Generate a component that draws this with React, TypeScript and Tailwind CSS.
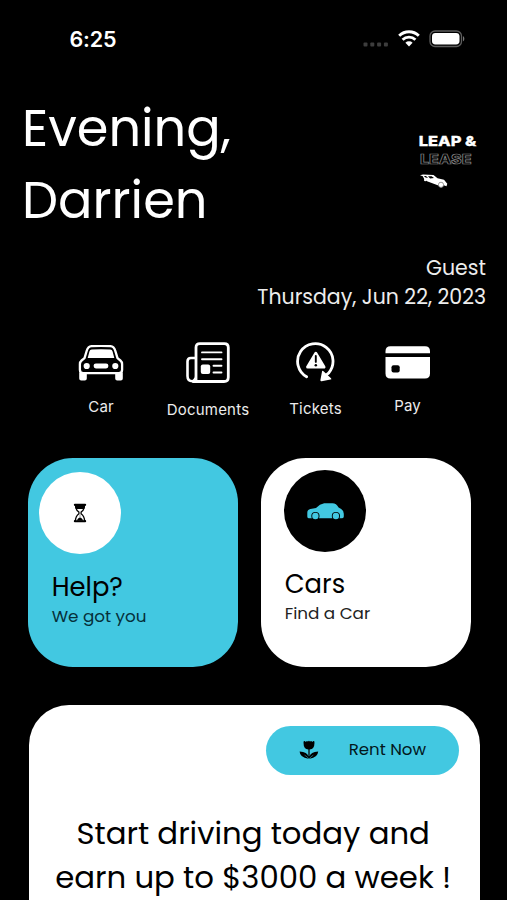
import React from "react";

const poppins = "font-['Poppins',Inter,sans-serif] whitespace-nowrap";

function StatusBar() {
  return (
    <div className="flex h-[91.5px] items-start pl-[69.5px] pr-[41px] pt-[27px]">
      <span className="text-[21.5px] leading-6 font-semibold tracking-[-0.15px]">6:25</span>
      <div className="ml-auto flex items-start">
        <svg className="mt-[14.5px]" width="26" height="5" viewBox="0 0 26 5" fill="#3d3d3d">
          <rect x="0.5" y="0.5" width="4" height="4" rx="1" />
          <rect x="7.3" y="0.5" width="4" height="4" rx="1" />
          <rect x="14.1" y="0.5" width="4" height="4" rx="1" />
          <rect x="20.9" y="0.5" width="4" height="4" rx="1" />
        </svg>
        <svg className="ml-[9px] mt-[3px]" width="22" height="17" viewBox="0 0 22 17" fill="none" stroke="white" strokeWidth="2.9">
          <path d="M1.2 5.7a14 14 0 0 1 19.6 0" />
          <path d="M4.6 9.7a9.2 9.2 0 0 1 12.8 0" />
          <path d="M7.4 12.7a5.2 5.2 0 0 1 7.2 0L11 16.4z" fill="white" stroke="none" />
        </svg>
        <svg className="ml-[9px] mt-[2.5px]" width="37" height="18" viewBox="0 0 37 18">
          <rect x="1" y="1" width="31.5" height="15.5" rx="5" fill="none" stroke="#5c5c5c" strokeWidth="1.3" />
          <rect x="3" y="3" width="27.5" height="11.5" rx="3.4" fill="white" />
          <path d="M34 6.2c1.8.6 1.8 4.4 0 5z" fill="#777" />
        </svg>
      </div>
    </div>
  );
}

function Logo() {
  return (
    <svg width="62" height="58" viewBox="0 0 62 58" fontFamily="Inter, sans-serif" fontWeight="800">
      <text x="2.8" y="14.4" fontSize="13.8" fill="white" stroke="white" strokeWidth="0.3" textLength="57.5" lengthAdjust="spacingAndGlyphs">LEAP &amp;</text>
      <text x="4" y="31.6" fontSize="13.8" fill="black" stroke="#858585" strokeWidth="0.7" textLength="51.5" lengthAdjust="spacingAndGlyphs">LEASE</text>
      <path d="M4 43.3L7 42.6 17.5 43 21.5 46.2 28 47.8 31.3 51.8 30.5 54.3 27.7 53.2A2.7 2.7 0 0 1 22.4 53.5L11 49.2 8.3 47.3 6.8 44.3z" fill="white" />
      <path d="M12 44.2l3.6.1 2.4 1.8-3.9.4zM7.8 44l2.2.1 2 2-2.4-.5z" fill="black" />
      <circle cx="25" cy="52.8" r="2.6" fill="white" stroke="black" strokeWidth="0.4" />
      <circle cx="9.2" cy="48" r="1.2" fill="white" />
    </svg>
  );
}

function CarFrontIcon() {
  return (
    <svg width="46" height="36" viewBox="0 0 46 36">
      <path d="M1.2 27.5h7.6v6a2 2 0 0 1-2 2H3.2a2 2 0 0 1-2-2zM37.2 27.5h7.6v6a2 2 0 0 1-2 2h-3.6a2 2 0 0 1-2-2z" fill="white" />
      <path d="M6.5 13.2L8.7 5.8Q10 1.5 13.5 1.2Q23 .4 32.5 1.2Q36 1.5 37.3 5.8l2.2 7.4 2.9 2.3q1.7 1.4 1.7 3.8v5.5q0 3.4-3.4 3.4H5.3q-3.4 0-3.4-3.4v-5.5q0-2.4 1.7-3.8z" fill="black" stroke="white" strokeWidth="2.3" strokeLinejoin="round" />
      <path d="M11.4 6.6q.5-1.9 2.4-2 9.2-.5 18.4 0 1.9.1 2.4 2l1.7 6.4H9.7z" fill="white" />
      <circle cx="8.7" cy="21" r="3.1" fill="white" />
      <circle cx="37.3" cy="21" r="3.1" fill="white" />
      <rect x="15.6" y="18.5" width="14.8" height="4.9" rx="2.3" fill="white" />
    </svg>
  );
}

function NewspaperIcon() {
  return (
    <svg width="44" height="42" viewBox="0 0 44 42" fill="none" stroke="white">
      <path d="M10 16H4.8Q1.5 16 1.5 19.5V34q0 5.2 5 5.2" strokeWidth="2.6" />
      <path d="M10 38.5V5.6Q10 1.6 14 1.6H38.3Q42.3 1.6 42.3 5.6V35.2Q42.3 39.5 38 39.5H6.3Q10 38 10 34" strokeWidth="2.8" />
      <path d="M16 10.4H35.5M16 17.2H35.5M27.5 23.7H35.5M27.5 30.5H35.5" strokeWidth="1.9" strokeLinecap="round" />
      <rect x="14.8" y="22.6" width="9.4" height="9.3" rx="2" fill="white" stroke="none" />
    </svg>
  );
}

function TicketIcon() {
  return (
    <svg width="40" height="42" viewBox="0 0 40 42" fill="none">
      <path d="M10.6 34.8A17.7 17.7 0 1 1 32.5 31.2L29.5 33.5" stroke="white" strokeWidth="2.8" strokeLinecap="round" />
      <path d="M26 29.8q0-1.6 1.5-.6L35 36.2q1.1 1.3-.5 1.4L25.7 39.2q-1.4.2-1.3-1.2z" fill="white" />
      <path d="M19.8 11.2L28 25.1H11.6z" fill="white" stroke="white" strokeWidth="3" strokeLinejoin="round" />
      <path d="M19.8 13.9v6" stroke="black" strokeWidth="1.9" strokeLinecap="round" />
      <circle cx="19.8" cy="23.2" r="1.25" fill="black" />
    </svg>
  );
}

function CardIcon() {
  return (
    <svg width="46" height="34" viewBox="0 0 46 34" fill="white">
      <path d="M.5 7.3V5.3Q.5.2 5.5.2H40Q45 .2 45 5.3V7.3zM.5 11H45V27.5Q45 32.5 40 32.5H5.5Q.5 32.5 .5 27.5z" />
      <rect x="6.5" y="19.3" width="8.2" height="7.2" rx="2" fill="black" />
    </svg>
  );
}

function HourglassIcon() {
  return (
    <svg width="14" height="20" viewBox="0 0 14 20">
      <rect x="0.8" y="0.7" width="12.4" height="2.2" rx="1.1" />
      <rect x="0.8" y="17.1" width="12.4" height="2.2" rx="1.1" />
      <path d="M2.5 2q0 5 3.4 7v1.8Q2.5 13 2.5 18h9q0-5-3.4-7.2V9q3.4-2 3.4-7" fill="white" stroke="black" strokeWidth="1.3" />
      <path d="M1.9 2h10.2q-.2 2.5-1.1 4H3Q2.1 4.5 1.9 2z" />
      <path d="M7 11.5v3.2M4 17.5q1-2.5 3-2.8 2 .3 3 2.8z" stroke="black" strokeWidth="0.4" />
    </svg>
  );
}

function CarSideIcon() {
  return (
    <svg width="37" height="18" viewBox="0 0 37 18">
      <path d="M1.6 16.2Q.3 16.2.3 14.6V10.8Q.3 7.6 3.4 7L9 5.9Q12.8 2 17.2 1.2H25.4Q29.4 1.2 31.6 5.6L34.2 7.1Q36.8 8.6 36.8 11.8V14.6Q36.8 16.2 35.2 16.2z" fill="#42c8e1" />
      <circle cx="8.4" cy="14" r="4.1" fill="black" />
      <circle cx="28.9" cy="14" r="4.1" fill="black" />
      <circle cx="8.4" cy="14" r="3.2" fill="#42c8e1" />
      <circle cx="28.9" cy="14" r="3.2" fill="#42c8e1" />
    </svg>
  );
}

function FlowerIcon() {
  return (
    <svg width="20" height="20" viewBox="0 0 20 20">
      <path d="M4.6 1.5q.7-1.1 2.3.5Q8 .2 9 1.8q.9-2.2 2 0 1.1-1.6 2.2.2 1.5-1.6 2.2-.5Q16 9 10.6 9.6v7Q11.5 12 19.2 11.6 18.7 17.7 10.6 18.8H9.4Q1 17.7.6 11.6 8.4 12 9.4 16.6v-7Q4 9 4.6 1.5z" />
      <path d="M9.8 19Q9 17 5.6 15.2M10.3 19q.7-2 4-3.8" fill="none" stroke="#42c8e1" strokeWidth="0.5" />
    </svg>
  );
}

function Header() {
  return (
    <header className="flex h-[161px] justify-between pl-[22px] pr-[29px]">
      <h1 className={`${poppins} text-[51px] leading-[72px] font-normal`}>
        <span className="block">Evening,</span>
        <span className="block">Darrien</span>
      </h1>
      <div className="pt-[40.5px]"><Logo /></div>
    </header>
  );
}

function Shortcuts() {
  const label = "text-[15px] leading-5 text-[#ececec] whitespace-nowrap";
  return (
    <nav className="flex h-[116.5px] items-start pl-[78px]">
      <div className="flex w-[46px] flex-col items-center pt-[3.5px]">
        <CarFrontIcon />
        <span className={`${label} mt-[16px] tracking-[0.1px]`}>Car</span>
      </div>
      <div className="ml-[42px] flex w-[84px] flex-col items-center pt-[0.5px]">
        <NewspaperIcon />
        <span className={`${label} mt-[16px] tracking-[0.22px]`}>Documents</span>
      </div>
      <div className="ml-[38.5px] flex w-[54px] flex-col items-center pt-[0.5px]">
        <TicketIcon />
        <span className={`${label} mt-[15px] tracking-[0.2px]`}>Tickets</span>
      </div>
      <div className="ml-[42px] flex w-[46px] flex-col items-center pt-[4.5px]">
        <CardIcon />
        <span className={`${label} mt-[15.5px] tracking-[0.1px]`}>Pay</span>
      </div>
    </nav>
  );
}

function Tiles() {
  const title = `${poppins} block text-[25.8px] leading-[30px]`;
  const sub = `${poppins} block text-[16.8px] leading-5`;
  return (
    <section className="flex gap-[23px] pl-[27.7px] text-black">
      <div className="h-[209px] w-[210px] rounded-[45px] bg-[#42c8e1] pl-[11px] pt-[13.5px]">
        <div className="flex size-[82px] items-center justify-center rounded-full bg-white"><HourglassIcon /></div>
        <div className="pl-[13px] pt-[18px]">
          <span className={title}>Help?</span>
          <span className={`${sub} mt-[4px] text-[#06303a]`}>We got you</span>
        </div>
      </div>
      <div className="h-[209px] w-[210px] rounded-[45px] bg-white pl-[23px] pt-[11.5px]">
        <div className="flex size-[82px] items-center justify-center rounded-full bg-black pl-px"><CarSideIcon /></div>
        <div className="pl-px pt-[17px]">
          <span className={title}>Cars</span>
          <span className={`${sub} mt-[4px] text-[#222]`}>Find a Car</span>
        </div>
      </div>
    </section>
  );
}

function Promo() {
  return (
    <section className="mt-[37.5px] ml-[28.7px] h-[196px] w-[451px] rounded-t-[40px] bg-white pt-[21px] text-black">
      <button className="ml-[237px] flex h-[49px] w-[193px] items-center rounded-[25px] bg-[#42c8e1] pl-[33px]">
        <FlowerIcon />
        <span className={`${poppins} ml-[30px] text-[16.6px] leading-5 text-[#03181d]`}>Rent Now</span>
      </button>
      <p className={`${poppins} mt-[37.5px] flex flex-col items-center pr-[2px] text-[30.75px] leading-[43.5px]`}>
        <span>Start driving today and</span>
        <span>earn up to $3000 a week !</span>
      </p>
    </section>
  );
}

export default function App() {
  return (
    <main className="h-[900px] w-[507px] overflow-hidden bg-black font-['Inter',sans-serif] text-white">
      <StatusBar />
      <Header />
      <div className={`${poppins} flex h-[89px] flex-col items-end pr-[21px] text-[20.5px] leading-[29px] text-[#ededed]`}>
        <span>Guest</span>
        <span>Thursday, Jun 22, 2023</span>
      </div>
      <Shortcuts />
      <Tiles />
      <Promo />
    </main>
  );
}
